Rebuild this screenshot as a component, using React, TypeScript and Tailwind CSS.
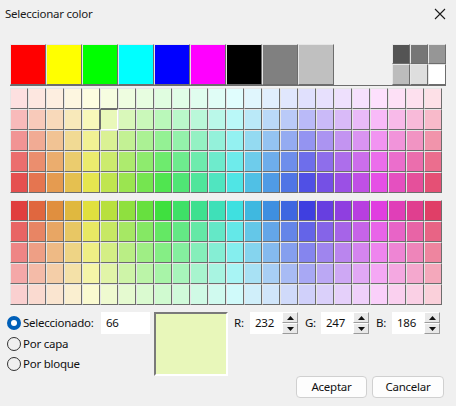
import React from "react";

const hsv = (h: number, s: number, v: number) => {
  const c = v * s;
  const x = c * (1 - Math.abs(((h / 60) % 2) - 1));
  const m = v - c;
  let r = 0, g = 0, b = 0;
  if (h < 60) { r = c; g = x; }
  else if (h < 120) { r = x; g = c; }
  else if (h < 180) { g = c; b = x; }
  else if (h < 240) { g = x; b = c; }
  else if (h < 300) { r = x; b = c; }
  else { r = c; b = x; }
  return `rgb(${Math.round(r + m)},${Math.round(g + m)},${Math.round(b + m)})`;
};

const topRows: [number, number][] = [
  [253, 0.115],
  [248, 0.25],
  [241, 0.385],
  [235, 0.53],
  [229, 0.65],
];
const bottomRows: [number, number][] = [
  [224, 0.72],
  [232, 0.57],
  [238, 0.44],
  [244, 0.31],
  [250, 0.17],
];

const cols = Array.from({ length: 24 }, (_, i) => i);

function Cell({ color, selected }: { color: string; selected?: boolean }) {
  return (
    <div
      className={
        selected
          ? "w-[18px] h-[21px] border-t border-l border-t-[#6d6d6d] border-l-[#6d6d6d] border-r border-b border-r-white border-b-white"
          : "w-[18px] h-[21px] border-t border-l border-t-[#e6e6e6] border-l-[#e6e6e6] border-r border-b border-r-[#6d6d6d] border-b-[#6d6d6d]"
      }
      style={{ backgroundColor: color }}
    />
  );
}

function Block({ rows, selRow, selCol }: { rows: [number, number][]; selRow?: number; selCol?: number }) {
  return (
    <div className="flex flex-col">
      {rows.map(([v, s], ri) => (
        <div key={ri} className="flex">
          {cols.map((ci) => (
            <Cell key={ci} color={hsv(ci * 15, s, v)} selected={ri === selRow && ci === selCol} />
          ))}
        </div>
      ))}
    </div>
  );
}

const bigColors = ["#ff0000", "#ffff00", "#00ff00", "#00ffff", "#0000ff", "#ff00ff", "#000000", "#808080", "#c0c0c0"];
const grays = ["#545454", "#767676", "#969696", "#bcbcbc", "#dedede", "#ffffff"];

function Spinner() {
  return (
    <div className="flex flex-col w-[16px] h-[22px]">
      <div className="h-[11px] flex items-center justify-center bg-[#e9e9e9] border-t border-l border-t-white border-l-white border-r border-b border-r-[#9a9a9a] border-b-[#9a9a9a]">
        <svg width="7" height="4" viewBox="0 0 7 4"><polygon points="3.5,0 7,4 0,4" fill="#111" /></svg>
      </div>
      <div className="h-[11px] flex items-center justify-center bg-[#e9e9e9] border-t border-l border-t-white border-l-white border-r border-b border-r-[#9a9a9a] border-b-[#9a9a9a]">
        <svg width="7" height="4" viewBox="0 0 7 4"><polygon points="0,0 7,0 3.5,4" fill="#111" /></svg>
      </div>
    </div>
  );
}

function RGBField({ label, value, first }: { label: string; value: string; first?: boolean }) {
  return (
    <div className={first ? "flex items-start" : "flex items-start ml-[7px]"}>
      <div className="w-[16px] h-[22px] flex items-center">{label}</div>
      <div className="w-[32px] h-[22px] bg-white pl-[5px] flex items-center">{value}</div>
      <Spinner />
    </div>
  );
}

function Radio({ checked, label, h }: { checked?: boolean; label: string; h: string }) {
  return (
    <div className={`flex items-center ${h}`}>
      {checked ? (
        <div className="w-[14px] h-[14px] rounded-full bg-[#005fb8] flex items-center justify-center">
          <div className="w-[6px] h-[6px] rounded-full bg-white" />
        </div>
      ) : (
        <div className="w-[14px] h-[14px] rounded-full border border-[#333333]" />
      )}
      <span className="ml-[2px]">{label}</span>
    </div>
  );
}

export default function App() {
  return (
    <div className="w-[456px] h-[406px] bg-[#f0f0f0] flex flex-col text-[11.5px] tracking-[-0.25px] text-[#111] font-['Noto_Sans',sans-serif] overflow-hidden">
      <div className="h-[27px] flex items-center justify-between pl-[5px] pr-[10px]">
        <span className="text-[#1a1a1a]">Seleccionar color</span>
        <svg width="12" height="12" viewBox="0 0 12 12">
          <path d="M1 1 L11 11 M11 1 L1 11" stroke="#1a1a1a" strokeWidth="1.1" />
        </svg>
      </div>
      <div className="px-[10px] mt-[17px] flex flex-col">
        <div className="flex justify-between h-[41px]">
          <div className="flex">
            {bigColors.map((c) => (
              <div key={c} className="w-[36px] h-[41px] border-t border-l border-t-[#e6e6e6] border-l-[#e6e6e6] border-r border-b border-r-[#6d6d6d] border-b-[#6d6d6d]" style={{ backgroundColor: c }} />
            ))}
          </div>
          <div className="grid grid-cols-3 w-[54px]">
            {grays.map((c, i) => (
              <div key={i} className={`w-[18px] ${i < 3 ? "h-[20px]" : "h-[21px]"} border-t border-l border-t-[#e6e6e6] border-l-[#e6e6e6] border-r border-b border-r-[#6d6d6d] border-b-[#6d6d6d]`} style={{ backgroundColor: c }} />
            ))}
          </div>
        </div>
        <div className="border-t border-[#6d6d6d] pt-[2px]">
          <Block rows={topRows} selRow={1} selCol={5} />
        </div>
        <div className="mt-[7px]">
          <Block rows={bottomRows} />
        </div>
      </div>
      <div className="flex items-start pl-[7px] mt-[7px]">
        <div className="w-[94px] flex flex-col">
          <Radio checked label="Seleccionado:" h="h-[22px]" />
          <Radio label="Por capa" h="h-[20px]" />
          <Radio label="Por bloque" h="h-[20px]" />
        </div>
        <div className="w-[49px] h-[22px] bg-white pl-[5px] flex items-center">66</div>
        <div className="ml-[4px] w-[74px] h-[64px] bg-[#e8f7ba] border-2 border-t-[#7a7a7a] border-l-[#7a7a7a] border-r-white border-b-white" />
        <div className="ml-[6px] w-[210px] h-[86px] flex flex-col justify-between">
          <div className="flex">
            <RGBField first label="R:" value="232" />
            <RGBField label="G:" value="247" />
            <RGBField label="B:" value="186" />
          </div>
          <div className="flex justify-end gap-[5px]">
            <button className="w-[71px] h-[22px] rounded-[4px] border border-[#d0d0d0] bg-[#fdfdfd] flex items-center justify-center">Aceptar</button>
            <button className="w-[72px] h-[22px] rounded-[4px] border border-[#d0d0d0] bg-[#fdfdfd] flex items-center justify-center">Cancelar</button>
          </div>
        </div>
      </div>
    </div>
  );
}
